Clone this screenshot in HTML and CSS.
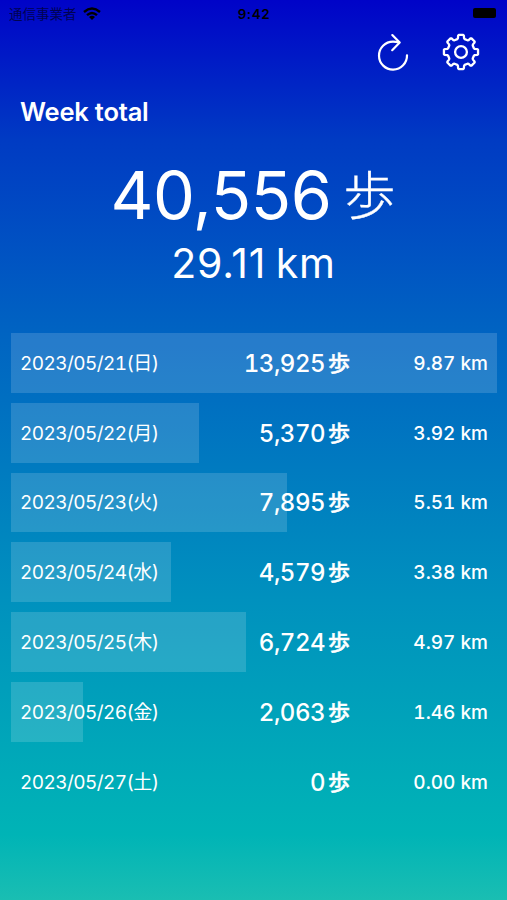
FILE: index.html
```
<!DOCTYPE html>
<html lang="ja">
<head>
    <meta charset="UTF-8">
    <title>Week total</title>
    <link rel="stylesheet" href="styles.css">
</head>
<body>
    <div class="status">
        <div class="carrier">
            <span>通信事業者</span>
            <svg width="18" height="13" viewBox="0 0 18 13" fill="none" stroke="#000" stroke-width="2.4">
                <path d="M1 5 Q9 -1.8 17 5"/>
                <path d="M4 8.2 Q9 3.8 14 8.2"/>
                <path d="M6 10 Q9 7.6 12 10 L9 13 Z" fill="#000" stroke="none"/>
            </svg>
        </div>
        <span class="time">9:42</span>
        <div class="battery"></div>
    </div>
    <div class="tools">
        <svg width="34" height="40" viewBox="0 0 34 40" fill="none" stroke="#fff" stroke-width="2.2" stroke-linecap="round" stroke-linejoin="round">
            <path d="M32 23.3 A14 14 0 1 1 18 9.6 Q21 9.6 24 10.4"/>
            <path d="M17.3 3.1 L24.7 10.6 L17.2 18.2"/>
        </svg>
        <svg width="38" height="40" viewBox="-19 -20 38 40" fill="none" stroke="#fff" stroke-width="2.3" stroke-linejoin="round">
            <path class="gear" d=""/>
            <circle r="5.9"/>
        </svg>
    </div>
    <h1>Week total</h1>
    <div class="total"><span class="num">40,556</span><span class="unit">歩</span></div>
    <div class="distance">29.11 km</div>
    <div class="list">
        <div class="row"><div class="bar" style="width: 100%;"></div><span class="date">2023/05/21(日)</span><span class="steps">13,925<b>歩</b></span><span class="km">9.87 km</span></div>
        <div class="row"><div class="bar" style="width: 38.6%;"></div><span class="date">2023/05/22(月)</span><span class="steps">5,370<b>歩</b></span><span class="km">3.92 km</span></div>
        <div class="row"><div class="bar" style="width: 56.7%;"></div><span class="date">2023/05/23(火)</span><span class="steps">7,895<b>歩</b></span><span class="km">5.51 km</span></div>
        <div class="row"><div class="bar" style="width: 32.9%;"></div><span class="date">2023/05/24(水)</span><span class="steps">4,579<b>歩</b></span><span class="km">3.38 km</span></div>
        <div class="row"><div class="bar" style="width: 48.3%;"></div><span class="date">2023/05/25(木)</span><span class="steps">6,724<b>歩</b></span><span class="km">4.97 km</span></div>
        <div class="row"><div class="bar" style="width: 14.8%;"></div><span class="date">2023/05/26(金)</span><span class="steps">2,063<b>歩</b></span><span class="km">1.46 km</span></div>
        <div class="row"><div class="bar" style="width: 0;"></div><span class="date">2023/05/27(土)</span><span class="steps">0<b>歩</b></span><span class="km">0.00 km</span></div>
    </div>
    <script>
        // eight rounded teeth: [angle offset, radius] for each one
        var tooth = [[-16, 13.4], [-12.5, 14.2], [-10, 16.5], [-7.5, 17.2], [7.5, 17.2], [10, 16.5], [12.5, 14.2], [16, 13.4]];
        var d = '';
        for (var i = 0; i < 8; i++) {
            for (var j = 0; j < tooth.length; j++) {
                var a = (i * 45 + tooth[j][0]) * Math.PI / 180;
                var x = (Math.sin(a) * tooth[j][1]).toFixed(2);
                var y = (-Math.cos(a) * tooth[j][1]).toFixed(2);
                d += (d ? 'L' : 'M') + x + ' ' + y;
            }
        }
        document.getElementsByClassName('gear')[0].setAttribute('d', d + 'Z');
    </script>
</body>
</html>
```
FILE: styles.css
```
html, body {margin: 0; padding: 0;}
body {height: 900px; overflow: hidden; color: #fff; font-family: Inter, "Noto Sans CJK JP", sans-serif; background: linear-gradient(#0003c8 0, #003bc3 140px, #0064c2 335px, #0091be 600px, #00b4b6 835px, #1abeb2 900px);}
svg {display: block;}
.status {display: grid; grid-template-columns: 1fr auto 1fr; align-items: center; height: 28px; padding: 0 11px 0 9px; color: #000;}
.carrier {display: flex; align-items: center; gap: 6px; font-size: 13.5px; line-height: 28px;}
.carrier span {opacity: 0.6;}
.carrier svg {margin-top: -2px;}
.time {font-size: 13.5px; font-weight: 600; letter-spacing: 0.6px; margin-left: 3px;}
.battery {justify-self: end; width: 23px; height: 10px; margin-top: -2px; border-radius: 2px; background: #000;}
.tools {display: flex; justify-content: flex-end; gap: 33px; height: 40px; padding: 4px 27px 0 0;}
h1 {margin: 24px 0 0 20px; font-size: 25.5px; line-height: 32px; font-weight: 600; letter-spacing: -0.2px;}
.total {display: flex; justify-content: center; margin-top: 27px; height: 80px; line-height: 80px;}
.num {margin-left: -1px; font-size: 66.5px; letter-spacing: -0.4px;}
.unit {margin: 2px 0 0 12px; font-size: 52px; font-weight: 300; -webkit-text-stroke: 0.4px #fff;}
.distance {height: 52px; margin-top: 2px; text-align: center; font-size: 41px; line-height: 52px; letter-spacing: 0.8px; word-spacing: -3px;}
.list {display: grid; gap: 10px; margin: 44px 10px 0 11px;}
.row {position: relative; display: grid; grid-template-columns: 180px 149px 1fr; align-items: center; height: 59.8px; padding: 1px 9px 0 10px; box-sizing: border-box; font-variant-numeric: tabular-nums;}
.bar {position: absolute; left: 0; top: 0; height: 100%; background: rgba(255, 255, 255, 0.15);}
.row span {position: relative; white-space: nowrap; line-height: 30px;}
.date {padding-top: 1px; margin-left: -1px; font-size: 19px; letter-spacing: -0.58px;}
.row .steps {display: flex; justify-content: flex-end; line-height: 32px; padding-top: 1px; font-size: 24px; font-weight: 500; letter-spacing: -0.5px;}
.steps b {margin: -1px 0 0 3px; font-size: 22px; font-weight: 500; letter-spacing: 0; -webkit-text-stroke: 0.4px #fff;}
.km {padding-top: 1px; text-align: right; font-size: 19px; font-weight: 500;}
```
